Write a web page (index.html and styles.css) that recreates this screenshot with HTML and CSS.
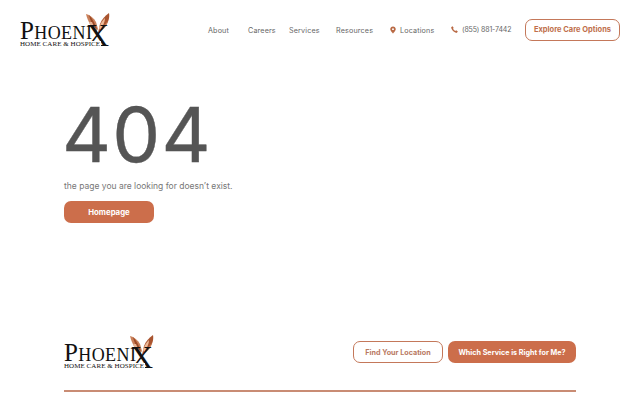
FILE: index.html
```html
<!DOCTYPE html>
<html lang="en">
<head>
<meta charset="utf-8">
<title>Phoenix Home Care &amp; Hospice</title>
<link rel="stylesheet" href="styles.css">
</head>
<body>
<header class="site-header">
  <a class="logo" href="#">
    <svg class="wings" viewBox="0 0 24 20" aria-hidden="true">
      <path d="M0 1C4 2 8 5 10 9L12 16L10 19C6 15 2 9 0 1Z" fill="#c9805a"/>
      <path d="M3 2C6 5 8 9 11 16L8 14C6 11 4 7 3 2Z" fill="#9c4a26"/>
      <path d="M6 9C7 12 9 15 11 18L7 16C5 14 4 12 3 9Z" fill="#e6b494"/>
      <path d="M23 0C24 5 22 11 17 16L12 20L14 11C16 6 19 3 23 0Z" fill="#a9542f"/>
      <path d="M19 5C19 9 17 13 14 17L13 15C14 11 16 8 19 5Z" fill="#eebb98"/>
      <path d="M22 8C21 12 19 15 15 18L17 13C19 12 20 10 22 8Z" fill="#cf8258"/>
    </svg>
    <span class="logo-name"><span class="logo-cap">P</span>HOENI</span>
    <span class="logo-x">X</span>
    <span class="logo-sub">HOME CARE &amp; HOSPICE</span>
  </a>
  <nav class="nav">
    <a class="nav-link nav-about" href="#">About</a>
    <a class="nav-link nav-careers" href="#">Careers</a>
    <a class="nav-link nav-services" href="#">Services</a>
    <a class="nav-link nav-resources" href="#">Resources</a>
    <a class="nav-link nav-locations" href="#">
      <svg class="pin" viewBox="0 0 10 12" aria-hidden="true"><path fill-rule="evenodd" d="M5 0C2.300 0 .4 2 .4 4.500C.4 7.500 5 12 5 12S9.600 7.500 9.600 4.500C9.600 2 7.700 0 5 0ZM5 3A1.600 1.600 0 1 1 5 6.200A1.600 1.600 0 0 1 5 3Z" fill="#b96a45"/></svg>
      Locations
    </a>
    <a class="nav-link nav-phone" href="#">
      <svg class="phone" viewBox="0 0 10 10" aria-hidden="true"><path d="M.6 1.300L2.300.2L3.900 2.700L2.900 3.600C3.400 5 4.800 6.400 6.300 7L7.300 6L9.800 7.800L8.700 9.400C8.300 9.900 7.600 9.900 7 9.700C3.900 8.600 1.300 5.900.3 2.900C.1 2.300.2 1.700.6 1.300Z" fill="#b96a45"/></svg>
      (855) 881-7442
    </a>
  </nav>
  <a class="btn btn-outline btn-explore" href="#">Explore Care Options</a>
</header>

<main class="error">
  <h1 class="error-code">404</h1>
  <p class="error-text">the page you are looking for doesn’t exist.</p>
  <a class="btn btn-solid btn-home" href="#">Homepage</a>
</main>

<footer class="site-footer">
  <div class="footer-top">
    <a class="logo" href="#">
      <svg class="wings" viewBox="0 0 24 20" aria-hidden="true">
        <path d="M0 1C4 2 8 5 10 9L12 16L10 19C6 15 2 9 0 1Z" fill="#c9805a"/>
        <path d="M3 2C6 5 8 9 11 16L8 14C6 11 4 7 3 2Z" fill="#9c4a26"/>
        <path d="M6 9C7 12 9 15 11 18L7 16C5 14 4 12 3 9Z" fill="#e6b494"/>
        <path d="M23 0C24 5 22 11 17 16L12 20L14 11C16 6 19 3 23 0Z" fill="#a9542f"/>
        <path d="M19 5C19 9 17 13 14 17L13 15C14 11 16 8 19 5Z" fill="#eebb98"/>
        <path d="M22 8C21 12 19 15 15 18L17 13C19 12 20 10 22 8Z" fill="#cf8258"/>
      </svg>
      <span class="logo-name"><span class="logo-cap">P</span>HOENI</span>
      <span class="logo-x">X</span>
      <span class="logo-sub">HOME CARE &amp; HOSPICE</span>
    </a>
    <div class="footer-actions">
      <a class="btn btn-outline btn-find" href="#">Find Your Location</a>
      <a class="btn btn-solid btn-which" href="#">Which Service is Right for Me?</a>
    </div>
  </div>
  <hr class="footer-rule">
</footer>
</body>
</html>
```

FILE: styles.css
```css
* { box-sizing: border-box; }
html, body { margin: 0; height: 400px; overflow: hidden; background: #fff; }
body { font-family: Inter, "Open Sans", sans-serif; color: #555; }
a { color: inherit; text-decoration: none; }

.site-header {
  display: flex;
  align-items: center;
  padding: 13px 20px 0;
  height: 46px;
}
.logo {
  position: relative;
  display: block;
  width: 90px;
  height: 34px;
  flex: none;
  font-family: "Liberation Serif", serif;
  color: #111;
}
.wings { position: absolute; left: 66px; top: 0; width: 24px; height: 20px; }
.logo-name {
  position: absolute;
  left: 0;
  top: 8px;
  font-size: 18px;
  line-height: 20px;
  letter-spacing: 0.4px;
  white-space: nowrap;
}
.logo-cap { font-size: 25px; }
.logo-x {
  position: absolute;
  left: 66px;
  top: 7px;
  font-size: 32px;
  line-height: 30px;
}
.logo-sub {
  position: absolute;
  left: 0;
  top: 28px;
  padding-right: 1px;
  background: #fff;
  font-size: 7px;
  line-height: 7px;
  letter-spacing: 0.05px;
  white-space: nowrap;
}

.nav {
  display: flex;
  align-items: center;
  margin-left: 98px;
  font-size: 7.200px;
  letter-spacing: 0.15px;
  color: #666;
  padding-top: 1px;
}
.nav-link { display: flex; align-items: center; white-space: nowrap; }
.nav-about { width: 40px; }
.nav-careers { width: 41px; }
.nav-services { width: 47px; }
.nav-resources { width: 54px; }
.nav-locations { width: 61px; gap: 4px; }
.pin { width: 6px; height: 8px; }
.nav-phone { gap: 4px; margin-top: -2px; font-size: 7px; letter-spacing: -0.15px; }
.phone { width: 7px; height: 7px; }

.btn {
  display: flex;
  align-items: center;
  justify-content: center;
  border-radius: 7px;
  font-size: 7.500px;
  font-weight: 700;
  white-space: nowrap;
}
.btn-outline {
  background: #fff;
  border: 1.500px solid #c4785a;
  color: #c06f4c;
}
.btn-solid {
  background: #cc6e4b;
  color: #fff;
}
.btn-explore { width: 95px; height: 22px; margin-left: auto; }

.error { padding: 43px 0 0 62px; }
.error-code {
  margin: 0;
  font-size: 76px;
  line-height: 91px;
  font-weight: 400;
  color: #555;
  letter-spacing: 1.200px;
  -webkit-text-stroke: 0.4px #555;
}
.error-text {
  margin: 0 0 0 2px;
  font-size: 8.500px;
  line-height: 12px;
  color: #777;
}
.btn-home { width: 90px; height: 22px; margin: 9px 0 0 2px; font-size: 7.800px; }

.site-footer { padding: 112px 64px 0; }
.footer-top { display: flex; align-items: center; justify-content: space-between; }
.footer-actions { display: flex; gap: 5px; }
.btn-find { width: 90px; height: 22px; color: #b9795f; font-size: 7.200px; }
.btn-which { width: 128px; height: 22px; font-size: 7.200px; }
.footer-rule {
  margin: 21px 0 0;
  border: 0;
  height: 2px;
  background: #c98c74;
}
```
